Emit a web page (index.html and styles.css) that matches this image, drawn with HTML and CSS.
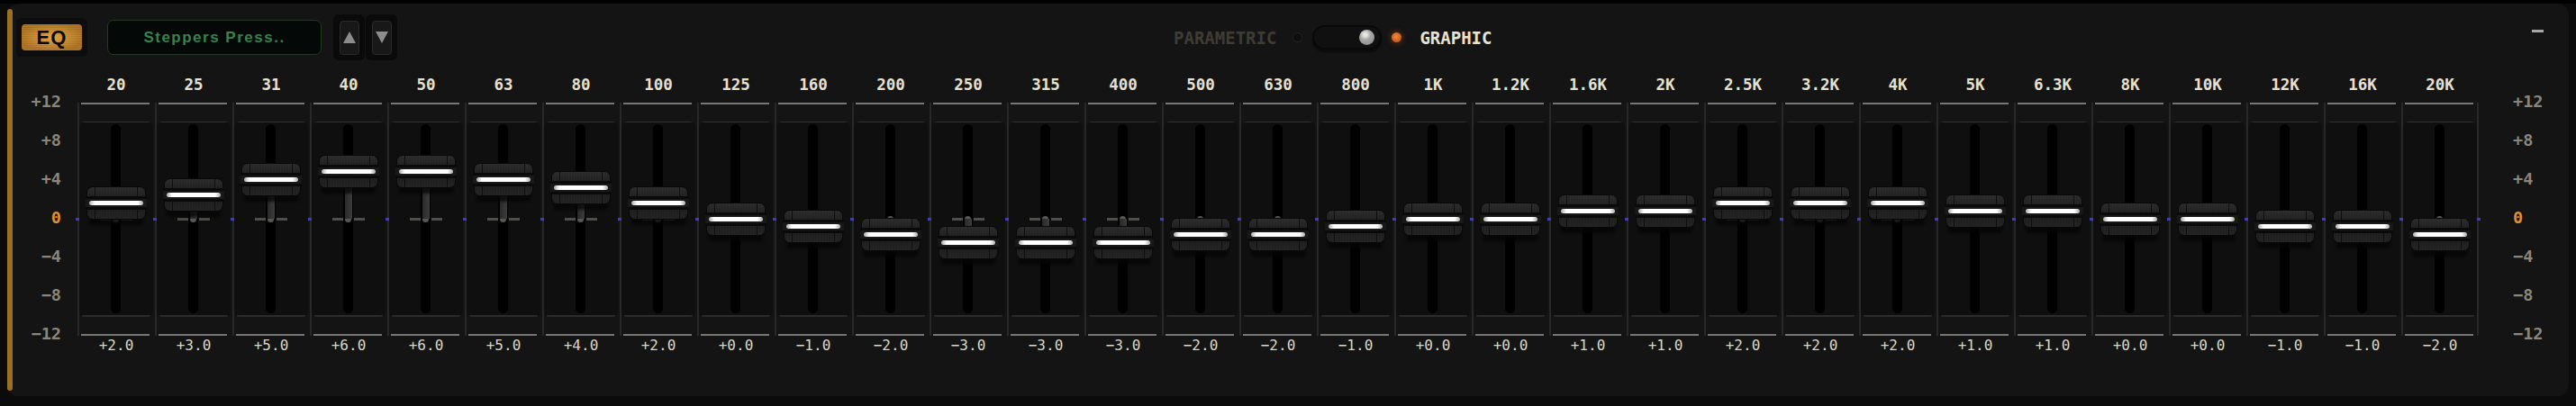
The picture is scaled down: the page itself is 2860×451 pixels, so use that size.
FILE: index.html
```html
<!DOCTYPE html>
<html lang="en">
  <head>
    <meta charset="UTF-8" />
    <title>EQ</title>
    <link rel="stylesheet" href="styles.css">
  </head>
  <body>
    <div class="panel">
      <div class="strip"></div>
      <div class="content">
        <div class="header">
          <div class="eq-frame"><div class="eq-button">EQ</div></div>
          <div class="preset">Steppers Press..</div>
          <div class="step step-first">
            <div class="step-inner">
              <svg width="14" height="13" viewBox="0 0 14 13"><polygon points="7,0 14,13 0,13" fill="#8c8c8c" /></svg>
            </div>
          </div>
          <div class="step">
            <div class="step-inner">
              <svg width="14" height="13" viewBox="0 0 14 13"><polygon points="0,0 14,0 7,13" fill="#8c8c8c" /></svg>
            </div>
          </div>
          <div class="mode">
            <span class="mode-label mode-off">PARAMETRIC</span>
            <span class="led"></span>
            <div class="toggle"><span class="toggle-knob"></span></div>
            <span class="led led-on"></span>
            <span class="mode-label mode-on">GRAPHIC</span>
          </div>
          <span class="minimize"></span>
        </div>

        <div class="main">
          <div class="scale scale-left">
            <span>+12</span><span>+8</span><span>+4</span><span class="zero">0</span><span>−4</span><span>−8</span><span>−12</span>
          </div>

          <div class="bands">
            <div class="band band-up" style="--db: 2"><div class="freq">20</div><div class="fader"><div class="well"><div class="slot"></div></div><span class="mark"></span><span class="stem"></span><span class="cap"></span></div><div class="val">+2.0</div></div>
            <div class="band band-up" style="--db: 3"><div class="freq">25</div><div class="fader"><div class="well"><div class="slot"></div></div><span class="mark"></span><span class="stem"></span><span class="cap"></span></div><div class="val">+3.0</div></div>
            <div class="band band-up" style="--db: 5"><div class="freq">31</div><div class="fader"><div class="well"><div class="slot"></div></div><span class="mark"></span><span class="stem"></span><span class="cap"></span></div><div class="val">+5.0</div></div>
            <div class="band band-up" style="--db: 6"><div class="freq">40</div><div class="fader"><div class="well"><div class="slot"></div></div><span class="mark"></span><span class="stem"></span><span class="cap"></span></div><div class="val">+6.0</div></div>
            <div class="band band-up" style="--db: 6"><div class="freq">50</div><div class="fader"><div class="well"><div class="slot"></div></div><span class="mark"></span><span class="stem"></span><span class="cap"></span></div><div class="val">+6.0</div></div>
            <div class="band band-up" style="--db: 5"><div class="freq">63</div><div class="fader"><div class="well"><div class="slot"></div></div><span class="mark"></span><span class="stem"></span><span class="cap"></span></div><div class="val">+5.0</div></div>
            <div class="band band-up" style="--db: 4"><div class="freq">80</div><div class="fader"><div class="well"><div class="slot"></div></div><span class="mark"></span><span class="stem"></span><span class="cap"></span></div><div class="val">+4.0</div></div>
            <div class="band band-up" style="--db: 2"><div class="freq">100</div><div class="fader"><div class="well"><div class="slot"></div></div><span class="mark"></span><span class="stem"></span><span class="cap"></span></div><div class="val">+2.0</div></div>
            <div class="band" style="--db: 0"><div class="freq">125</div><div class="fader"><div class="well"><div class="slot"></div></div><span class="mark"></span><span class="cap"></span></div><div class="val">+0.0</div></div>
            <div class="band band-down" style="--db: -1"><div class="freq">160</div><div class="fader"><div class="well"><div class="slot"></div></div><span class="mark"></span><span class="stem"></span><span class="cap"></span></div><div class="val">−1.0</div></div>
            <div class="band band-down" style="--db: -2"><div class="freq">200</div><div class="fader"><div class="well"><div class="slot"></div></div><span class="mark"></span><span class="stem"></span><span class="cap"></span></div><div class="val">−2.0</div></div>
            <div class="band band-down" style="--db: -3"><div class="freq">250</div><div class="fader"><div class="well"><div class="slot"></div></div><span class="mark"></span><span class="stem"></span><span class="cap"></span></div><div class="val">−3.0</div></div>
            <div class="band band-down" style="--db: -3"><div class="freq">315</div><div class="fader"><div class="well"><div class="slot"></div></div><span class="mark"></span><span class="stem"></span><span class="cap"></span></div><div class="val">−3.0</div></div>
            <div class="band band-down" style="--db: -3"><div class="freq">400</div><div class="fader"><div class="well"><div class="slot"></div></div><span class="mark"></span><span class="stem"></span><span class="cap"></span></div><div class="val">−3.0</div></div>
            <div class="band band-down" style="--db: -2"><div class="freq">500</div><div class="fader"><div class="well"><div class="slot"></div></div><span class="mark"></span><span class="stem"></span><span class="cap"></span></div><div class="val">−2.0</div></div>
            <div class="band band-down" style="--db: -2"><div class="freq">630</div><div class="fader"><div class="well"><div class="slot"></div></div><span class="mark"></span><span class="stem"></span><span class="cap"></span></div><div class="val">−2.0</div></div>
            <div class="band band-down" style="--db: -1"><div class="freq">800</div><div class="fader"><div class="well"><div class="slot"></div></div><span class="mark"></span><span class="stem"></span><span class="cap"></span></div><div class="val">−1.0</div></div>
            <div class="band" style="--db: 0"><div class="freq">1K</div><div class="fader"><div class="well"><div class="slot"></div></div><span class="mark"></span><span class="cap"></span></div><div class="val">+0.0</div></div>
            <div class="band" style="--db: 0"><div class="freq">1.2K</div><div class="fader"><div class="well"><div class="slot"></div></div><span class="mark"></span><span class="cap"></span></div><div class="val">+0.0</div></div>
            <div class="band band-up" style="--db: 1"><div class="freq">1.6K</div><div class="fader"><div class="well"><div class="slot"></div></div><span class="mark"></span><span class="stem"></span><span class="cap"></span></div><div class="val">+1.0</div></div>
            <div class="band band-up" style="--db: 1"><div class="freq">2K</div><div class="fader"><div class="well"><div class="slot"></div></div><span class="mark"></span><span class="stem"></span><span class="cap"></span></div><div class="val">+1.0</div></div>
            <div class="band band-up" style="--db: 2"><div class="freq">2.5K</div><div class="fader"><div class="well"><div class="slot"></div></div><span class="mark"></span><span class="stem"></span><span class="cap"></span></div><div class="val">+2.0</div></div>
            <div class="band band-up" style="--db: 2"><div class="freq">3.2K</div><div class="fader"><div class="well"><div class="slot"></div></div><span class="mark"></span><span class="stem"></span><span class="cap"></span></div><div class="val">+2.0</div></div>
            <div class="band band-up" style="--db: 2"><div class="freq">4K</div><div class="fader"><div class="well"><div class="slot"></div></div><span class="mark"></span><span class="stem"></span><span class="cap"></span></div><div class="val">+2.0</div></div>
            <div class="band band-up" style="--db: 1"><div class="freq">5K</div><div class="fader"><div class="well"><div class="slot"></div></div><span class="mark"></span><span class="stem"></span><span class="cap"></span></div><div class="val">+1.0</div></div>
            <div class="band band-up" style="--db: 1"><div class="freq">6.3K</div><div class="fader"><div class="well"><div class="slot"></div></div><span class="mark"></span><span class="stem"></span><span class="cap"></span></div><div class="val">+1.0</div></div>
            <div class="band" style="--db: 0"><div class="freq">8K</div><div class="fader"><div class="well"><div class="slot"></div></div><span class="mark"></span><span class="cap"></span></div><div class="val">+0.0</div></div>
            <div class="band" style="--db: 0"><div class="freq">10K</div><div class="fader"><div class="well"><div class="slot"></div></div><span class="mark"></span><span class="cap"></span></div><div class="val">+0.0</div></div>
            <div class="band band-down" style="--db: -1"><div class="freq">12K</div><div class="fader"><div class="well"><div class="slot"></div></div><span class="mark"></span><span class="stem"></span><span class="cap"></span></div><div class="val">−1.0</div></div>
            <div class="band band-down" style="--db: -1"><div class="freq">16K</div><div class="fader"><div class="well"><div class="slot"></div></div><span class="mark"></span><span class="stem"></span><span class="cap"></span></div><div class="val">−1.0</div></div>
            <div class="band band-down band-last" style="--db: -2"><div class="freq">20K</div><div class="fader"><div class="well"><div class="slot"></div></div><span class="mark"></span><span class="stem"></span><span class="cap"></span></div><div class="val">−2.0</div></div>
          </div>

          <div class="scale scale-right">
            <span>+12</span><span>+8</span><span>+4</span><span class="zero">0</span><span>−4</span><span>−8</span><span>−12</span>
          </div>
        </div>
      </div>
    </div>
  </body>
</html>
```
FILE: styles.css
```css
html,
body {
  margin: 0;
  height: 451px;
  overflow: hidden;
}
body {
  box-sizing: border-box;
  padding: 4px 8px 11px;
  background: linear-gradient(#000 0 4px, #0b0b0b 4px);
  font-family: "DejaVu Sans Mono", monospace;
}
.panel {
  display: flex;
  box-sizing: border-box;
  height: 436px;
  padding: 6px 0;
  background: #141414;
  border-radius: 12px;
}
.strip {
  width: 6px;
  background: #9c6f24;
  border-radius: 3px;
}
.content {
  flex: 1;
}

/* top row */
.header {
  display: flex;
  align-items: center;
  height: 51px;
  margin-top: 6px;
  padding: 0 28px 0 4px;
}
.eq-frame {
  box-sizing: border-box;
  width: 79px;
  height: 43px;
  padding: 7px 6px;
  background: #0d0d0d;
  border-radius: 6px;
}
.eq-button {
  height: 29px;
  line-height: 30px;
  text-align: center;
  font-family: "Liberation Sans", sans-serif;
  font-weight: bold;
  font-size: 22px;
  letter-spacing: 1px;
  color: #0a0805;
  background:
    radial-gradient(ellipse at center, rgba(245, 175, 75, 0.8), rgba(240, 170, 70, 0) 75%),
    repeating-linear-gradient(#b27a26 0 1px, #a16c20 1px 2px);
  border-radius: 4px;
}
.preset {
  box-sizing: border-box;
  width: 238px;
  height: 39px;
  margin-left: 22px;
  line-height: 37px;
  text-align: center;
  font-family: "Liberation Sans", sans-serif;
  font-weight: bold;
  font-size: 17px;
  letter-spacing: 1.5px;
  color: #37824d;
  background: #040908;
  border: 1px solid #1c3d20;
  border-radius: 7px;
}
.step {
  display: flex;
  align-items: center;
  justify-content: center;
  width: 35px;
  height: 51px;
  margin-left: 1px;
  background: #0a0a0a;
  border-radius: 6px;
}
.step-first {
  margin-left: 13px;
}
.step-inner {
  display: flex;
  align-items: center;
  justify-content: center;
  box-sizing: border-box;
  width: 22px;
  height: 38px;
  background: #181818;
  border: 1px solid #2a2a2a;
  border-radius: 4px;
}
.mode {
  display: flex;
  align-items: center;
  margin-left: 862px;
}
.mode-label {
  font-weight: bold;
  font-size: 19px;
}
.mode-off {
  color: #3f3c35;
}
.mode-on {
  margin-left: 20px;
  color: #e8e2d2;
}
.led {
  box-sizing: border-box;
  width: 11px;
  height: 11px;
  margin: 0 11px 0 18px;
  background: #0e0e0e;
  border: 1px solid #262626;
  border-radius: 50%;
}
.led-on {
  margin: 0;
  margin-left: 11px;
  border: 0;
  background: radial-gradient(circle at 45% 40%, #f08a3a, #c8561a 75%);
  box-shadow: 0 0 7px rgba(220, 90, 20, 0.55);
}
.toggle {
  display: flex;
  align-items: center;
  justify-content: flex-end;
  box-sizing: border-box;
  width: 77px;
  height: 27px;
  padding-right: 6px;
  background: #101010;
  border: 2px solid #090909;
  border-radius: 14px;
  box-shadow: 0 3px 2px #0b0b0b;
}
.toggle-knob {
  width: 17px;
  height: 17px;
  background: radial-gradient(circle at 40% 32%, #e6e6e0 0 12%, #a8a8a8 38%, #808080);
  border-radius: 50%;
}
.minimize {
  width: 13px;
  height: 3px;
  margin-left: auto;
  margin-bottom: 15px;
  background: #a8a8a8;
}

/* faders */
.main {
  display: flex;
  margin-top: 17px;
}
.scale {
  display: flex;
  flex-direction: column;
  justify-content: space-between;
  box-sizing: border-box;
  height: 280px;
  margin-top: 18px;
  font-weight: bold;
  font-size: 18.5px;
  line-height: 22px;
  color: #8a867c;
}
.scale-left {
  width: 72px;
  padding-right: 18px;
  text-align: right;
}
.scale-right {
  padding-left: 38px;
}
.zero {
  color: #df8f2d;
}
.bands {
  display: grid;
  grid-template-columns: repeat(31, 86px);
}
.freq {
  height: 20px;
  margin-bottom: 10px;
  line-height: 20px;
  text-align: center;
  font-weight: bold;
  font-size: 17.5px;
  color: #e6e0d0;
}
.val {
  line-height: 22px;
  text-align: center;
  font-size: 16px;
  color: #dcd6c6;
}
.fader {
  position: relative;
  box-sizing: border-box;
  height: 259px;
  padding: 21px 2px 0;
  background:
    linear-gradient(#2a2826, #2a2826) left top / 2px 100% no-repeat,
    linear-gradient(#777, #777) 4px 0 / 76px 2px no-repeat,
    linear-gradient(#777, #777) 4px 257px / 76px 2px no-repeat;
}
/* blue tick on the zero line */
.fader::before {
  content: "";
  position: absolute;
  left: -2px;
  top: 128px;
  width: 4px;
  height: 3px;
  background: #4240a6;
}
.band-last .fader::after {
  content: "";
  position: absolute;
  right: -2px;
  top: 0;
  width: 4px;
  height: 100%;
  background:
    linear-gradient(#4240a6, #4240a6) 0 128px / 4px 3px no-repeat,
    linear-gradient(#2a2826, #2a2826) 0 0 / 2px 100% no-repeat;
}
.well {
  box-sizing: border-box;
  height: 217px;
  padding-top: 3px;
  background:
    linear-gradient(#33312e, #33312e) center top / 76px 1px no-repeat,
    linear-gradient(#2c2c2c, #2c2c2c) center bottom / 76px 2px no-repeat,
    #0f0f0f;
  border-radius: 6px;
}
.slot {
  width: 11px;
  height: 210px;
  margin-left: 35px;
  background: #000;
  border-radius: 6px;
}
.mark {
  position: absolute;
  left: 25px;
  top: 128px;
  width: 36px;
  height: 3px;
  background: linear-gradient(to right, #504e4a 0 12px, transparent 12px 24px, #504e4a 24px);
}
.mark::after {
  content: "";
  position: absolute;
  left: 14px;
  top: -2px;
  width: 7px;
  height: 7px;
  background: #575757;
  border-radius: 50%;
}
.stem {
  position: absolute;
  left: 39px;
  width: 8px;
  background: linear-gradient(to right, #2a2a2a, #3c3c3c);
}
.band-up .stem {
  top: calc(129px - var(--db) * 8.7px);
  height: calc(var(--db) * 8.7px);
}
.band-down .stem {
  top: 129px;
  height: calc(var(--db) * -8.7px);
}
.cap {
  position: absolute;
  left: 10px;
  top: calc(110.5px - var(--db) * 8.7px);
  box-sizing: border-box;
  width: 66px;
  height: 37px;
  background:
    linear-gradient(to right, transparent 8px, #0e0e0e 8px 9px, transparent 9px 55px, #0e0e0e 55px 56px, transparent 56px),
    repeating-linear-gradient(to right, rgba(255, 255, 255, 0.02) 0 1px, transparent 1px 3px),
    linear-gradient(#2b2b2b, #1a1a1a 45%, #222 100%);
  border: 1px solid #080808;
  border-radius: 7px;
  box-shadow: 0 9px 3px -3px rgba(6, 6, 6, 0.75);
}
/* dark grooves around the white line */
.cap::before {
  content: "";
  position: absolute;
  left: -2px;
  right: -2px;
  top: 10px;
  height: 9px;
  background: #181818;
  border-top: 3px solid #0a0a0a;
  border-bottom: 3px solid #0a0a0a;
}
.cap::after {
  content: "";
  position: absolute;
  left: 2px;
  right: 2px;
  top: 15px;
  height: 5px;
  background: linear-gradient(to right, #aaa, #fff 6px, #fff 54px, #aaa);
  border-radius: 3px;
}
```
